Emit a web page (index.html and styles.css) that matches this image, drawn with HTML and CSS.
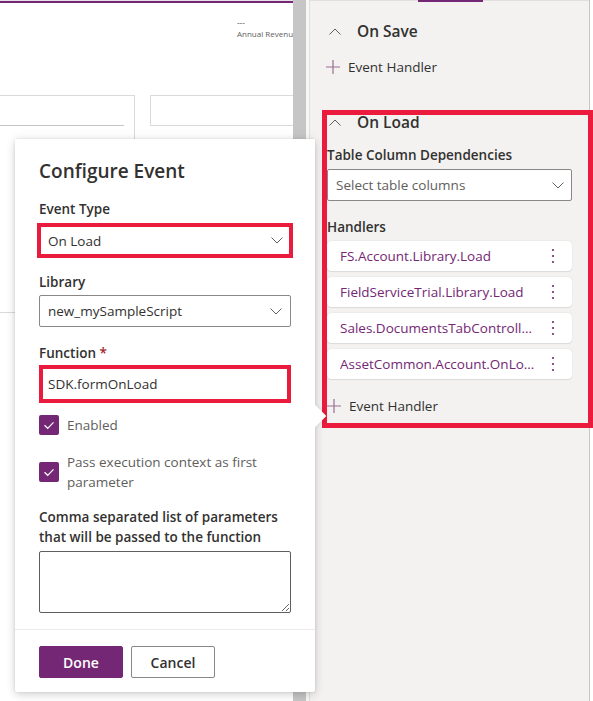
FILE: index.html
```html
<!DOCTYPE html>
<html lang="en">
<head>
<meta charset="utf-8">
<title>Configure Event</title>
<link rel="stylesheet" href="styles.css">
</head>
<body>
<div class="canvas">
  <div class="accent"></div>
  <div class="kpi">
    <div class="kpi-val">---</div>
    <div class="kpi-label">Annual Revenue</div>
  </div>
  <div class="fields">
    <div class="field field-a"><div class="field-line"></div></div>
    <div class="field field-b"></div>
  </div>
</div>
<div class="scrollbar"></div>
<div class="gutter"></div>
<div class="panel">
  <div class="tabbar"><div class="tab-ind"></div></div>
  <section class="evt">
    <div class="evt-head">
      <svg class="chev-up" width="12" height="7" viewBox="0 0 12 7"><polyline points="0.5,6.5 6,1 11.5,6.5" fill="none" stroke="#605e5c" stroke-width="1"/></svg>
      <span>On Save</span>
    </div>
    <div class="add">
      <svg class="plus" width="14" height="14" viewBox="0 0 14 14"><path d="M7 0V14M0 7H14" stroke="#9a6f92" stroke-width="1.2" fill="none"/></svg>
      <span>Event Handler</span>
    </div>
  </section>
  <section class="evt evt-hl">
    <div class="evt-head">
      <svg class="chev-up" width="12" height="7" viewBox="0 0 12 7"><polyline points="0.5,6.5 6,1 11.5,6.5" fill="none" stroke="#605e5c" stroke-width="1"/></svg>
      <span>On Load</span>
    </div>
    <div class="sub-label">Table Column Dependencies</div>
    <div class="select">
      <span>Select table columns</span>
      <svg width="12" height="7" viewBox="0 0 12 7"><polyline points="0.5,0.5 6,6 11.5,0.5" fill="none" stroke="#605e5c" stroke-width="1"/></svg>
    </div>
    <div class="sub-label handlers-label">Handlers</div>
    <div class="handlers">
      <div class="handler"><span class="h-name">FS.Account.Library.Load</span><svg class="more" width="4" height="16" viewBox="0 0 4 16"><circle cx="2" cy="2" r="1.1"/><circle cx="2" cy="8" r="1.1"/><circle cx="2" cy="14" r="1.1"/></svg></div>
      <div class="handler"><span class="h-name">FieldServiceTrial.Library.Load</span><svg class="more" width="4" height="16" viewBox="0 0 4 16"><circle cx="2" cy="2" r="1.1"/><circle cx="2" cy="8" r="1.1"/><circle cx="2" cy="14" r="1.1"/></svg></div>
      <div class="handler"><span class="h-name">Sales.DocumentsTabController.Load</span><svg class="more" width="4" height="16" viewBox="0 0 4 16"><circle cx="2" cy="2" r="1.1"/><circle cx="2" cy="8" r="1.1"/><circle cx="2" cy="14" r="1.1"/></svg></div>
      <div class="handler"><span class="h-name">AssetCommon.Account.OnLoad</span><svg class="more" width="4" height="16" viewBox="0 0 4 16"><circle cx="2" cy="2" r="1.1"/><circle cx="2" cy="8" r="1.1"/><circle cx="2" cy="14" r="1.1"/></svg></div>
    </div>
    <div class="add add-bottom">
      <svg class="plus" width="14" height="14" viewBox="0 0 14 14"><path d="M7 0V14M0 7H14" stroke="#9a6f92" stroke-width="1.2" fill="none"/></svg>
      <span>Event Handler</span>
    </div>
  </section>
</div>

<div class="callout">
  <div class="beak"></div>
  <div class="callout-body">
    <h2 class="title">Configure Event</h2>
    <label class="lbl">Event Type</label>
    <div class="dd dd-hl">
      <span>On Load</span>
      <svg width="12" height="7" viewBox="0 0 12 7"><polyline points="0.5,0.5 6,6 11.5,0.5" fill="none" stroke="#605e5c" stroke-width="1"/></svg>
    </div>
    <label class="lbl lbl-gap">Library</label>
    <div class="dd">
      <span>new_mySampleScript</span>
      <svg width="12" height="7" viewBox="0 0 12 7"><polyline points="0.5,0.5 6,6 11.5,0.5" fill="none" stroke="#605e5c" stroke-width="1"/></svg>
    </div>
    <label class="lbl lbl-gap2">Function <span class="req">*</span></label>
    <div class="input-hl">SDK.formOnLoad</div>
    <div class="check check-1">
      <span class="box"><svg width="20" height="20" viewBox="0 0 20 20"><polyline points="5.5,10.2 8.7,13.3 14.5,7.3" fill="none" stroke="#fff" stroke-width="1.2"/></svg></span>
      <span class="check-text">Enabled</span>
    </div>
    <div class="check check-2">
      <span class="box"><svg width="20" height="20" viewBox="0 0 20 20"><polyline points="5.5,10.2 8.7,13.3 14.5,7.3" fill="none" stroke="#fff" stroke-width="1.2"/></svg></span>
      <span class="check-text">Pass execution context as first parameter</span>
    </div>
    <label class="lbl lbl-params">Comma separated list of parameters that will be passed to the function</label>
    <textarea class="params"></textarea>
  </div>
  <div class="callout-foot">
    <button class="btn btn-primary">Done</button>
    <button class="btn">Cancel</button>
  </div>
</div>
</body>
</html>
```

FILE: styles.css
```css
* { box-sizing: border-box; }

html, body {
  margin: 0;
  padding: 0;
}

body {
  position: relative;
  width: 593px;
  height: 701px;
  overflow: hidden;
  display: flex;
  background: #ffffff;
  font-family: "Open Sans", "Noto Sans", sans-serif;
  font-size: 13.5px;
  color: #323130;
}

/* ---------- background form canvas ---------- */
.canvas {
  width: 293px;
  flex: none;
  overflow: hidden;
  background: #fff;
}

.accent {
  height: 3px;
  border-top: 1px solid #e9dfe9;
  background: #742774;
}

.kpi {
  margin-left: 237px;
  padding-top: 13px;
  white-space: nowrap;
  font-size: 8px;
  line-height: 12px;
}

.kpi-val { color: #323130; }
.kpi-label { color: #605e5c; }

.fields {
  display: flex;
  margin-top: 55px;
  margin-left: -1px;
}

.field {
  flex: none;
  border: 1px solid #dcdad8;
  background: #fff;
}

.field-a {
  width: 136px;
  height: 218px;
  padding-top: 29px;
}

.field-line {
  width: 124px;
  border-bottom: 1px solid #c8c6c4;
}

.field-b {
  margin-left: 15px;
  width: 160px;
  height: 31px;
}

.scrollbar {
  width: 13px;
  flex: none;
  background: #c6c6c6;
}

.gutter {
  width: 3px;
  flex: none;
  background: #f7f7f7;
}

/* ---------- right panel ---------- */
.panel {
  width: 281px;
  flex: none;
  background: #f3f2f1;
  border-left: 1px solid #e1dfdd;
  border-right: 1px solid #c8c6c4;
}

.tabbar {
  height: 2px;
  border-top: 1px solid #e1dfdd;
}

.tab-ind {
  margin-left: 108px;
  width: 65px;
  height: 2px;
  margin-top: -1px;
  background: #742774;
}

.evt {
  padding-left: 16px;
}

.evt-head {
  display: flex;
  align-items: center;
  height: 20px;
  margin-top: 19px;
  font-size: 15.5px;
  font-weight: 600;
  color: #323130;
}

.chev-up {
  margin-left: 3px;
  margin-right: 16px;
}

.add {
  display: flex;
  align-items: center;
  height: 20px;
  margin-top: 16px;
  color: #323130;
}

.plus {
  margin-right: 8px;
}

.evt-hl {
  margin-top: 33px;
  margin-left: 12px;
  width: 271px;
  border: 5px solid #ea1b3d;
  padding: 0 16px 7px 0;
}

.evt-hl .evt-head {
  margin-top: 0;
  height: 14px;
}

.evt-hl .chev-up {
  margin-left: 2px;
}

.sub-label {
  margin-top: 16px;
  line-height: 20px;
  font-weight: 600;
  color: #323130;
}

.select {
  margin-top: 4px;
  height: 32px;
  display: flex;
  align-items: center;
  justify-content: space-between;
  padding: 0 7px 0 8px;
  background: #fff;
  border: 1px solid #8a8886;
  border-radius: 2px;
  color: #605e5c;
}

.handlers-label {
  margin-top: 16px;
}

.handlers {
  margin-top: 4px;
  display: flex;
  flex-direction: column;
  gap: 6px;
}

.handler {
  height: 30px;
  display: flex;
  align-items: center;
  justify-content: space-between;
  padding: 0 17px 0 13px;
  background: #fff;
  border-radius: 4px;
  box-shadow: 0 0 1px rgba(0, 0, 0, 0.18), 0 0.5px 1px rgba(0, 0, 0, 0.08);
}

.h-name {
  color: #742774;
  white-space: nowrap;
  overflow: hidden;
  text-overflow: ellipsis;
  min-width: 0;
  margin-right: 12px;
}

.more {
  flex: none;
  fill: #742774;
}

.add-bottom {
  margin-top: 17px;
}

/* ---------- callout ---------- */
.callout {
  position: absolute;
  left: 15px;
  top: 139px;
  width: 300px;
  background: #fff;
  border-radius: 2px;
  box-shadow: 0 3px 8px rgba(0, 0, 0, 0.13), 0 0 3px rgba(0, 0, 0, 0.11), 0 0 14px rgba(0, 0, 0, 0.06);
  z-index: 5;
}

.beak {
  position: absolute;
  right: -8px;
  top: 269px;
  width: 16px;
  height: 16px;
  background: #fff;
  transform: rotate(45deg);
  box-shadow: 2px -2px 4px rgba(0, 0, 0, 0.05);
}

.callout-body {
  position: relative;
  padding: 18px 24px 16px 24px;
  display: flex;
  flex-direction: column;
  background: #fff;
}

.title {
  margin: 0;
  font-size: 19px;
  line-height: 28px;
  font-weight: 600;
  color: #323130;
}

.lbl {
  display: block;
  margin-top: 14px;
  line-height: 20px;
  font-weight: 600;
  color: #323130;
}

.lbl-gap { margin-top: 14px; }
.lbl-gap2 { margin-top: 16px; }

.req { color: #a4262c; }

.dd {
  margin-top: 3px;
  height: 32px;
  display: flex;
  align-items: center;
  justify-content: space-between;
  padding: 0 8px;
  border: 1px solid #8a8886;
  border-radius: 2px;
  color: #323130;
}

.dd-hl {
  margin: 4px -2px 0 -2px;
  height: 35px;
  border: 4px solid #ea1b3d;
  border-radius: 0;
  padding: 0 6px 0 7px;
}

.input-hl {
  margin-top: 2px;
  height: 38px;
  display: flex;
  align-items: center;
  padding: 0 5px;
  border: 4px solid #ea1b3d;
  color: #323130;
}

.check {
  display: flex;
  align-items: center;
  gap: 8px;
}

.check-1 {
  margin-top: 12px;
  height: 20px;
}

.check-2 {
  margin-top: 17px;
}

.box {
  flex: none;
  width: 20px;
  height: 20px;
  border-radius: 2px;
  background: #742774;
  display: flex;
}

.check-text {
  line-height: 20px;
  color: #605e5c;
}

.lbl-params {
  margin-top: 15px;
}

.params {
  display: block;
  margin: 4px 0 0 0;
  width: 252px;
  height: 62px;
  border: 1px solid #605e5c;
  border-radius: 2px;
  resize: both;
  font-family: inherit;
}

.callout-foot {
  border-top: 1px solid #edebe9;
  padding: 16px 24px 14px 24px;
  display: flex;
  gap: 8px;
}

.btn {
  width: 84px;
  height: 32px;
  border: 1px solid #8a8886;
  border-radius: 2px;
  background: #fff;
  font-family: inherit;
  font-size: 14px;
  font-weight: 600;
  color: #323130;
  padding: 0;
}

.btn-primary {
  background: #742774;
  border-color: #742774;
  color: #fff;
}
```
